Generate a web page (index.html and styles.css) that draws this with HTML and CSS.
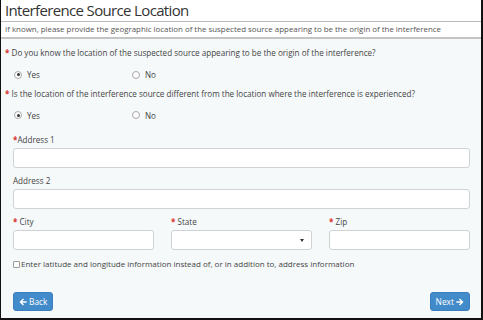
FILE: index.html
```html
<!DOCTYPE html>
<html lang="en">
<head>
  <meta charset="UTF-8" />
  <meta name="viewport" content="width=device-width, initial-scale=1.0"/>
  <title>Interference Source Location</title>
  <link rel="stylesheet" href="styles.css">
</head>
<body>
<div class="frame">

  <div class="page-head">
    <h1>Interference Source Location</h1>
  </div>
  <p class="subtitle">If known, please provide the geographic location of the suspected source appearing to be the origin of the interference</p>

  <div class="form-body">
    <!-- Question 1 -->
    <p class="question"><span class="req">*</span> Do you know the location of the suspected source appearing to be the origin of the interference?</p>
    <div class="radio-row">
      <label class="radio"><span class="dot checked"></span>Yes</label>
      <label class="radio"><span class="dot"></span>No</label>
    </div>

    <!-- Question 2 -->
    <p class="question"><span class="req">*</span> Is the location of the interference source different from the location where the interference is experienced?</p>
    <div class="radio-row">
      <label class="radio"><span class="dot checked"></span>Yes</label>
      <label class="radio"><span class="dot"></span>No</label>
    </div>

    <div class="address">
      <label class="field-label"><span class="req">*</span>Address 1</label>
      <div class="text-box"></div>

      <label class="field-label">Address 2</label>
      <div class="text-box"></div>

      <div class="cols">
        <div class="col">
          <label class="field-label"><span class="req">*</span> City</label>
          <div class="text-box"></div>
        </div>
        <div class="col">
          <label class="field-label"><span class="req">*</span> State</label>
          <div class="text-box select-box"><span class="caret"></span></div>
        </div>
        <div class="col">
          <label class="field-label"><span class="req">*</span> Zip</label>
          <div class="text-box"></div>
        </div>
      </div>

      <label class="check"><span class="box"></span>Enter latitude and longitude information instead of, or in addition to, address information</label>
    </div>

    <div class="buttons">
      <button class="btn">
        <svg width="8" height="8" viewBox="0 0 8 8"><path d="M0.5 4 L4 0.6 L5 1.6 L3.2 3.3 H7.6 V4.7 H3.2 L5 6.4 L4 7.4 Z" fill="#fff"/></svg>
        Back
      </button>
      <button class="btn">
        Next
        <svg width="8" height="8" viewBox="0 0 8 8"><path d="M7.5 4 L4 0.6 L3 1.6 L4.8 3.3 H0.4 V4.7 H4.8 L3 6.4 L4 7.4 Z" fill="#fff"/></svg>
      </button>
    </div>
  </div>

</div>
</body>
</html>
```

FILE: styles.css
```css
body {
  margin: 0;
  font-family: "Open Sans", "Noto Sans", sans-serif;
  color: #444;
  background-color: #fff;
}

.frame {
  width: 483px;
  height: 320px;
  box-sizing: border-box;
  border-left: 1px solid #111;
  border-right: 2px solid #111;
  border-bottom: 2px solid #111;
  background-color: #f5f9fa;
  display: flex;
  flex-direction: column;
}

.page-head {
  background-color: #fff;
  padding: 0 0 0 4px;
  height: 21px;
  border-bottom: 1px solid #b9b9b9;
}

.page-head h1 {
  margin: 0;
  font-size: 15px;
  font-weight: 400;
  line-height: 21px;
  color: #333;
  letter-spacing: -0.65px;
}

.subtitle {
  margin: 0;
  background-color: #fff;
  padding: 0 4px;
  height: 15px;
  line-height: 15px;
  font-size: 7.9px;
  color: #555;
  border-bottom: 2px solid #c4c4c4;
}

.form-body {
  padding: 0 11px 0 4px;
  flex: 1;
  display: flex;
  flex-direction: column;
}

.question {
  margin: 7px 0 0;
  font-size: 8.1px;
  line-height: 12px;
  color: #444;
}

.question:first-child {
  margin-top: 8px;
}

.req {
  color: #d9322e;
  font-weight: bold;
}

.radio-row {
  display: flex;
  margin: 9.5px 0 0 9px;
  height: 12px;
}

.radio {
  width: 118px;
  display: flex;
  align-items: center;
  font-size: 8.1px;
  color: #444;
}

.dot {
  width: 6px;
  height: 6px;
  border: 1px solid #aaa;
  border-radius: 50%;
  background-color: #fff;
  margin-right: 5px;
  position: relative;
}

.dot.checked::after {
  content: "";
  position: absolute;
  left: 1.5px;
  top: 1.5px;
  width: 3px;
  height: 3px;
  border-radius: 50%;
  background-color: #333;
}

.address {
  margin: 13px 0 0 8px;
  display: flex;
  flex-direction: column;
}

.field-label {
  font-size: 8.1px;
  line-height: 12px;
  color: #444;
  margin-bottom: 2px;
}

.text-box {
  height: 18px;
  background-color: #fff;
  border: 1px solid #cfd3d6;
  border-radius: 3px;
  margin-bottom: 7px;
  position: relative;
}

.cols {
  display: flex;
  gap: 17px;
}

.col {
  flex: 1;
  display: flex;
  flex-direction: column;
}

.caret {
  position: absolute;
  right: 7px;
  top: 8px;
  border-left: 2px solid transparent;
  border-right: 2px solid transparent;
  border-top: 3px solid #333;
}

.check {
  display: flex;
  align-items: center;
  font-size: 8px;
  line-height: 12px;
  color: #444;
  margin-top: 1px;
}

.box {
  width: 5px;
  height: 5px;
  border: 1px solid #999;
  border-radius: 1px;
  background-color: #fff;
  margin-right: 1px;
}

.buttons {
  display: flex;
  justify-content: space-between;
  margin: auto 0 7px 8px;
}

.btn {
  display: flex;
  align-items: center;
  gap: 2px;
  height: 19px;
  padding: 0 5px;
  background-color: #428bca;
  border: 1px solid #3b7fc0;
  border-radius: 3px;
  color: #fff;
  font-family: "Open Sans", "Noto Sans", sans-serif;
  font-size: 8.4px;
  cursor: pointer;
}
```
